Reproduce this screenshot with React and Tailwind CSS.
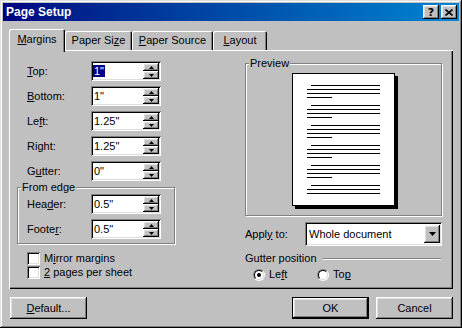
import React from "react";

const raised =
  "shadow-[inset_-1px_-1px_0_#000,inset_1px_1px_0_#fff,inset_-2px_-2px_0_#808080,inset_2px_2px_0_#dfdfdf]";
const sunken =
  "shadow-[inset_1px_1px_0_#808080,inset_-1px_-1px_0_#fff,inset_2px_2px_0_#000,inset_-2px_-2px_0_#dfdfdf]";

function TitleBtn({ children }) {
  return (
    <div
      className={
        "w-[16px] h-[14px] bg-[#c0c0c0] flex items-center justify-center " + raised
      }
    >
      {children}
    </div>
  );
}

function SpinBtn({ up }) {
  return (
    <div
      className={
        "h-[8px] w-[16px] bg-[#c0c0c0] flex items-center justify-center " + raised
      }
    >
      <svg width="5" height="3" viewBox="0 0 5 3">
        <polygon points={up ? "2.5,0 5,3 0,3" : "0,0 5,0 2.5,3"} fill="#000" />
      </svg>
    </div>
  );
}

function Spin({ value, selected }) {
  return (
    <div
      className={
        "w-[70px] h-[20px] bg-white flex items-center pl-[2px] pr-[2px] " + sunken
      }
    >
      <div className="flex-1 pl-[1px]">
        {selected ? (
          <span className="bg-[#000080] text-white px-[1px] -ml-[1px]">{value}</span>
        ) : (
          value
        )}
      </div>
      <div className="flex flex-col">
        <SpinBtn up />
        <SpinBtn />
      </div>
    </div>
  );
}

function Row({ label, value, selected }) {
  return (
    <div className="flex items-center h-[20px]">
      <div className="w-[64px]">{label}</div>
      <Spin value={value} selected={selected} />
    </div>
  );
}

function Check({ children }) {
  return (
    <div className="flex items-start h-[14px] gap-[4px]">
      <div className={"w-[13px] h-[13px] bg-white " + sunken} />
      <span>{children}</span>
    </div>
  );
}

function Radio({ checked, children }) {
  return (
    <div className="flex items-center gap-[4px]">
      <div className="w-[12px] h-[12px] rounded-full border border-t-[#808080] border-l-[#808080] border-r-white border-b-white">
        <div className="w-full h-full rounded-full bg-white border border-t-black border-l-black border-r-[#dfdfdf] border-b-[#dfdfdf] flex items-center justify-center">
          {checked && <div className="w-[4px] h-[4px] rounded-full bg-black" />}
        </div>
      </div>
      <span>{children}</span>
    </div>
  );
}

function Para({ short = true }) {
  return (
    <div className="flex flex-col gap-[3px] mb-[7px]">
      <div className="h-[1px] w-[69px] ml-[4px] bg-black" />
      <div className="h-[1px] w-[73px] bg-black" />
      <div className="h-[1px] w-[73px] bg-black" />
      {short && <div className="h-[1px] w-[25px] bg-black" />}
    </div>
  );
}

function Button({ children, isDefault }) {
  if (isDefault) {
    return (
      <div className="w-[77px] h-[22px] border border-black">
        <div className={"w-full h-full flex items-center justify-center bg-[#c0c0c0] " + raised}>
          {children}
        </div>
      </div>
    );
  }
  return (
    <div
      className={
        "w-[77px] h-[22px] flex items-center justify-center bg-[#c0c0c0] " + raised
      }
    >
      {children}
    </div>
  );
}

export default function App() {
  return (
    <div className="w-[462px] h-[328px] bg-[#c0c0c0] p-[3px] flex flex-col text-[11px] leading-[13px] text-black font-['Liberation_Sans',Arial,sans-serif] shadow-[inset_-1px_-1px_0_#000,inset_1px_1px_0_#dfdfdf,inset_-2px_-2px_0_#808080,inset_2px_2px_0_#fff] select-none">
      {/* Title bar */}
      <div className="h-[18px] flex items-center justify-between pl-[3px] pr-[2px] bg-linear-to-r from-[#000080] to-[#1084d0]">
        <span className="text-white font-bold text-[12px] leading-[14px]">Page Setup</span>
        <div className="flex gap-[2px]">
          <TitleBtn>
            <span className="font-bold text-[11px] leading-[11px] font-['DejaVu_Sans',sans-serif]">?</span>
          </TitleBtn>
          <TitleBtn>
            <svg width="8" height="7" viewBox="0 0 8 7">
              <path d="M0.5 0.5 L7.5 6.5 M7.5 0.5 L0.5 6.5" stroke="#000" strokeWidth="1.6" />
            </svg>
          </TitleBtn>
        </div>
      </div>

      <div className="px-[6px] mt-[8px] flex flex-col">
        {/* Tabs */}
        <div className="flex items-end h-[21px]">
          <div className="relative z-10 w-[56px] h-[23px] -mb-[2px] bg-[#c0c0c0] rounded-tl-[2px] rounded-tr-[2px] shadow-[inset_1px_1px_0_#fff,inset_-1px_0_0_#000,inset_-2px_0_0_#808080] flex justify-center pt-[4px]">
            <span>
              <u>M</u>argins
            </span>
          </div>
          <div className="w-[67px] h-[19px] rounded-tl-[2px] rounded-tr-[2px] shadow-[inset_1px_1px_0_#fff,inset_-1px_0_0_#000,inset_-2px_0_0_#808080] flex justify-center pt-[3px]">
            <span>
              Paper Si<u>z</u>e
            </span>
          </div>
          <div className="w-[81px] h-[19px] rounded-tl-[2px] rounded-tr-[2px] shadow-[inset_1px_1px_0_#fff,inset_-1px_0_0_#000,inset_-2px_0_0_#808080] flex justify-center pt-[3px]">
            <span>
              <u>P</u>aper Source
            </span>
          </div>
          <div className="w-[54px] h-[19px] rounded-tl-[2px] rounded-tr-[2px] shadow-[inset_1px_1px_0_#fff,inset_-1px_0_0_#000,inset_-2px_0_0_#808080] flex justify-center pt-[3px]">
            <span>
              <u>L</u>ayout
            </span>
          </div>
        </div>

        {/* Panel */}
        <div className="h-[239px] bg-[#c0c0c0] shadow-[inset_1px_1px_0_#fff,inset_-1px_-1px_0_#000,inset_-2px_-2px_0_#808080] flex justify-between pl-[8px] pr-[11px]">
          {/* Left column */}
          <div className="flex flex-col pt-[11px]">
            <div className="flex flex-col gap-[5px] pl-[10px]">
              <Row label={<><u>T</u>op:</>} value={'1"'} selected />
              <Row label={<><u>B</u>ottom:</>} value={'1"'} />
              <Row label={<>Le<u>f</u>t:</>} value={'1.25"'} />
              <Row label={<>Ri<u>g</u>ht:</>} value={'1.25"'} />
              <Row label={<>G<u>u</u>tter:</>} value={'0"'} />
            </div>
            <div className="relative mt-[6px] w-[158px] border border-[#808080] shadow-[inset_1px_1px_0_#fff,1px_1px_0_#fff] pt-[6px] pb-[4px] pl-[9px] flex flex-col gap-[5px]">
              <span className="absolute -top-[7px] left-[3px] px-[1px] bg-[#c0c0c0]">From edge</span>
              <Row label={<>Hea<u>d</u>er:</>} value={'0.5"'} />
              <Row label={<>Foote<u>r</u>:</>} value={'0.5"'} />
            </div>
            <div className="mt-[8px] pl-[10px] flex flex-col">
              <Check>
                M<u>i</u>rror margins
              </Check>
              <Check>
                <u>2</u> pages per sheet
              </Check>
            </div>
          </div>

          {/* Right column */}
          <div className="w-[197px] flex flex-col pt-[13px]">
            <div className="relative h-[153px] border border-[#808080] shadow-[inset_1px_1px_0_#fff,1px_1px_0_#fff] flex items-center justify-center">
              <span className="absolute -top-[7px] left-[3px] px-[1px] bg-[#c0c0c0]">Preview</span>
              <div className="w-[103px] h-[133px] border border-black bg-white shadow-[3px_3px_0_#000] pt-[11px] pl-[14px] flex flex-col">
                <Para />
                <Para />
                <Para />
                <Para />
                <Para />
                <Para short={false} />
              </div>
            </div>

            <div className="mt-[6px] flex items-center justify-between">
              <span>
                Appl<u>y</u> to:
              </span>
              <div className={"w-[137px] h-[24px] bg-white flex items-center pl-[4px] pr-[2px] " + sunken}>
                <span className="flex-1">Whole document</span>
                <div className={"w-[16px] h-[18px] bg-[#c0c0c0] flex items-center justify-center " + raised}>
                  <svg width="7" height="4" viewBox="0 0 7 4">
                    <polygon points="0,0 7,0 3.5,4" fill="#000" />
                  </svg>
                </div>
              </div>
            </div>

            <div className="mt-[6px] flex items-center h-[13px]">
              <span>Gutter position</span>
              <div className="flex-1 ml-[6px] mr-[1px] border-t border-t-[#808080] border-b border-b-white" />
            </div>

            <div className="mt-[3px] flex items-center pl-[8px]">
              <div className="w-[64px]">
                <Radio checked>
                  Le<u>f</u>t
                </Radio>
              </div>
              <Radio>
                To<u>p</u>
              </Radio>
            </div>
          </div>
        </div>

        {/* Buttons */}
        <div className="flex mt-[8px] gap-[7px]">
          <div className="ml-[1px] mr-auto">
            <Button>
              <span>
                <u>D</u>efault...
              </span>
            </Button>
          </div>
          <Button isDefault>OK</Button>
          <Button>Cancel</Button>
        </div>
      </div>
    </div>
  );
}
